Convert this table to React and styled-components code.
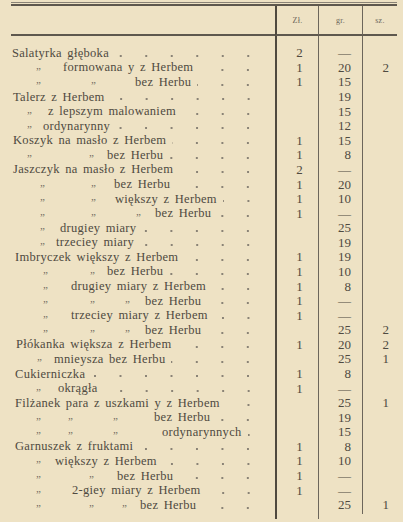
import React from 'react';
import styled, { createGlobalStyle } from 'styled-components';

const ORIGIN = 11;
const D = '„';

const rows = [
  { p: [[12, 'Salatyrka głęboka']], z: '2', g: '—' },
  { p: [[36, D], [63, 'formowana y z Herbem']], z: '1', g: '20', s: '2' },
  { p: [[36, D], [91, D], [135, 'bez Herbu']], z: '1', g: '15' },
  { p: [[13, 'Talerz z Herbem']], g: '19' },
  { p: [[27, D], [48, 'z lepszym malowaniem']], g: '15' },
  { p: [[27, D], [43, 'ordynarynny']], g: '12' },
  { p: [[13, 'Koszyk na masło z Herbem']], z: '1', g: '15' },
  { p: [[27, D], [89, D], [107, 'bez Herbu']], z: '1', g: '8' },
  { p: [[13, 'Jaszczyk na masło z Herbem']], z: '2', g: '—' },
  { p: [[40, D], [91, D], [114, 'bez Herbu']], z: '1', g: '20' },
  { p: [[40, D], [91, D], [115, 'większy z Herbem']], z: '1', g: '10' },
  { p: [[40, D], [91, D], [136, D], [155, 'bez Herbu']], z: '1', g: '—' },
  { p: [[40, D], [60, 'drugiey miary']], g: '25' },
  { p: [[40, D], [56, 'trzeciey miary']], g: '19' },
  { p: [[15, 'Imbryczek większy z Herbem']], z: '1', g: '19' },
  { p: [[43, D], [90, D], [107, 'bez Herbu']], z: '1', g: '10' },
  { p: [[43, D], [71, 'drugiey miary z Herbem']], z: '1', g: '8' },
  { p: [[43, D], [90, D], [125, D], [145, 'bez Herbu']], z: '1', g: '—' },
  { p: [[43, D], [71, 'trzeciey miary z Herbem']], z: '1', g: '—' },
  { p: [[43, D], [90, D], [125, D], [145, 'bez Herbu']], g: '25', s: '2' },
  { p: [[16, 'Płókanka większa z Herbem']], z: '1', g: '20', s: '2' },
  { p: [[37, D], [54, 'mnieysza bez Herbu']], g: '25', s: '1' },
  { p: [[15, 'Cukierniczka']], z: '1', g: '8' },
  { p: [[36, D], [58, 'okrągła']], z: '1', g: '—' },
  { p: [[15, 'Filżanek para z uszkami y z Herbem']], g: '25', s: '1' },
  { p: [[36, D], [68, D], [113, D], [154, 'bez Herbu']], g: '19' },
  { p: [[36, D], [68, D], [113, D], [162, 'ordynarynnych']], g: '15' },
  { p: [[15, 'Garnuszek z fruktami']], z: '1', g: '8' },
  { p: [[36, D], [55, 'większy z Herbem']], z: '1', g: '10' },
  { p: [[36, D], [89, D], [117, 'bez Herbu']], z: '1', g: '—' },
  { p: [[36, D], [72, '2-giey miary z Herbem']], z: '1', g: '—' },
  { p: [[36, D], [89, D], [122, D], [140, 'bez Herbu']], g: '25', s: '1' },
];

const GlobalStyle = createGlobalStyle`
  html, body {
    margin: 0;
    padding: 0;
    background: #eee2c4;
  }
  body {
    font-family: "Liberation Serif", "DejaVu Serif", serif;
    color: #4f4a41;
  }
`;

const Page = styled.div`
  width: 403px;
  height: 522px;
  padding: 2px 6px 0 ${ORIGIN}px;
  box-sizing: border-box;
  overflow: hidden;
`;

const TopRule = styled.div`
  width: 386px;
  height: 1px;
  background: #8a8376;
  margin-bottom: 1px;
`;

const Table = styled.div`
  display: grid;
  grid-template-columns: 264px 43px 44px 35px;
  width: 386px;
  border-top: 2px solid #5e584e;
`;

const lineStyle = p =>
  p.$line === 'thick'
    ? 'border-left: 2px solid #4f493f;'
    : p.$line === 'thin'
    ? 'border-left: 1px solid #6c665b;'
    : '';

const HeadCell = styled.div`
  height: 28px;
  display: flex;
  align-items: center;
  justify-content: center;
  font-size: 8px;
  color: #6b655a;
  letter-spacing: 0.3px;
  border-bottom: 2px solid #5e584e;
  ${lineStyle}
`;

const Spacer = styled.div`
  height: ${p => p.$h}px;
  ${lineStyle}
`;

const Desc = styled.div`
  height: 14.58px;
  display: flex;
  align-items: center;
  padding-right: 13px;
  font-size: 12.5px;
  letter-spacing: 0.3px;
  word-spacing: 2px;
  white-space: nowrap;
`;

const Piece = styled.span`
  flex: none;
  margin-left: ${p => p.$ml || 0}px;
  width: ${p => (p.$w ? `${p.$w}px` : 'auto')};
`;

const Ditto = styled.span`
  flex: none;
  margin-left: ${p => p.$ml || 0}px;
  width: ${p => p.$w}px;
  padding-bottom: 6px;
  font-size: 11px;
  line-height: 12px;
  color: #6d675c;
`;

const Leader = styled.span`
  flex: 1;
  align-self: stretch;
  margin-left: 6px;
  background-image: radial-gradient(circle, #8a8376 0.8px, transparent 1.1px);
  background-size: 25.5px 4px;
  background-position: right 1px bottom 3px;
  background-repeat: repeat-x;
`;

const Num = styled.div`
  height: 14.58px;
  display: flex;
  align-items: center;
  font-size: 13px;
  justify-content: ${p => p.$align};
  padding: 0 ${p => p.$pr || 0}px 0 ${p => p.$pl || 0}px;
  ${lineStyle}
`;

function Description({ parts }) {
  return (
    <Desc>
      {parts.map(([x, t], i) => {
        const next = parts[i + 1];
        const ml = i === 0 ? x - ORIGIN : 0;
        const w = next ? next[0] - x : null;
        return t === D ? (
          <Ditto key={i} $ml={ml} $w={w}>{t}</Ditto>
        ) : (
          <Piece key={i} $ml={ml} $w={w}>{t}</Piece>
        );
      })}
      <Leader />
    </Desc>
  );
}

export default function App() {
  return (
    <Page>
      <GlobalStyle />
      <TopRule />
      <Table>
        <HeadCell />
        <HeadCell $line="thick">Zł.</HeadCell>
        <HeadCell $line="thin">gr.</HeadCell>
        <HeadCell $line="thin">sz.</HeadCell>

        <Spacer $h={10} />
        <Spacer $h={10} $line="thick" />
        <Spacer $h={10} $line="thin" />
        <Spacer $h={10} $line="thin" />

        {rows.map((r, i) => (
          <React.Fragment key={i}>
            <Description parts={r.p} />
            <Num $line="thick" $align="center" $pl={4}>{r.z || ''}</Num>
            <Num $line="thin" $align="flex-end" $pr={11}>{r.g || ''}</Num>
            <Num $line="thin" $align="flex-end" $pr={8}>{r.s || ''}</Num>
          </React.Fragment>
        ))}

        <Spacer $h={6} />
        <Spacer $h={6} $line="thick" />
        <Spacer $h={6} $line="thin" />
        <Spacer $h={1} $line="thin" />
      </Table>
    </Page>
  );
}
